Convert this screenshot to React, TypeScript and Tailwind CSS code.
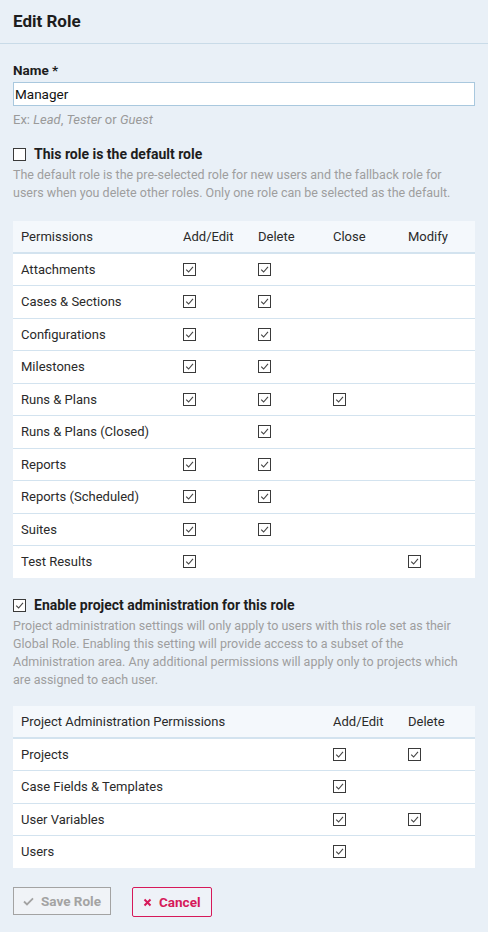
import React from 'react';

const font = { fontFamily: 'Roboto, "Noto Sans", sans-serif' };

type Perm = { name: string; cols: boolean[] };

const permissions: Perm[] = [
  { name: 'Attachments', cols: [true, true, false, false] },
  { name: 'Cases & Sections', cols: [true, true, false, false] },
  { name: 'Configurations', cols: [true, true, false, false] },
  { name: 'Milestones', cols: [true, true, false, false] },
  { name: 'Runs & Plans', cols: [true, true, true, false] },
  { name: 'Runs & Plans (Closed)', cols: [false, true, false, false] },
  { name: 'Reports', cols: [true, true, false, false] },
  { name: 'Reports (Scheduled)', cols: [true, true, false, false] },
  { name: 'Suites', cols: [true, true, false, false] },
  { name: 'Test Results', cols: [true, false, false, true] },
];

const adminPermissions: Perm[] = [
  { name: 'Projects', cols: [true, true] },
  { name: 'Case Fields & Templates', cols: [true, false] },
  { name: 'User Variables', cols: [true, true] },
  { name: 'Users', cols: [true, false] },
];

function Check({ checked }: { checked: boolean }) {
  return (
    <span className="inline-flex w-[13px] h-[13px] border border-[#3a3a3a] bg-white items-center justify-center">
      {checked && (
        <svg width="9" height="9" viewBox="0 0 9 9">
          <path d="M1.2 4.6 L3.6 7 L8 1.8" fill="none" stroke="#444" strokeWidth="1.1" />
        </svg>
      )}
    </span>
  );
}

export default function App() {
  return (
    <div className="w-[488px] min-h-[932px] bg-[#e9f0f7] text-[#222]" style={font}>
      <div className="h-[44px] px-[13px] pt-[1px] flex items-center border-b border-[#c9dbe8]">
        <h1 className="text-[17px] font-bold text-[#1d1d1d]">Edit Role</h1>
      </div>

      <div className="px-[13px] pt-[17px]">
        <label className="block text-[13.5px] font-bold text-[#1d1d1d] leading-[18px]">Name *</label>
        <input
          defaultValue="Manager"
          className="mt-[3px] w-full h-[24px] bg-white border border-[#a9c8de] px-[1px] text-[13.5px] text-[#111] outline-none"
          style={font}
        />
        <p className="mt-[5px] text-[13px] text-[#9a9a9a] leading-[18px]">
          Ex: <i>Lead</i>, <i>Tester</i> or <i>Guest</i>
        </p>

        <div className="mt-[15px] flex items-center gap-[8px]">
          <Check checked={false} />
          <span className="text-[14px] font-bold text-[#1d1d1d]">This role is the default role</span>
        </div>
        <p className="mt-[1px] text-[12.5px] text-[#9e9e9e] leading-[18px]">
          The default role is the pre-selected role for new users and the fallback role for users when you
          delete other roles. Only one role can be selected as the default.
        </p>

        <table className="mt-[19px] w-[462px] border-collapse text-[13px] text-[#2a2a2a]">
          <thead>
            <tr className="bg-[#f4f8fc] border-b-2 border-[#d3e3ef] h-[32px]">
              <th className="text-left font-normal pl-[8px] w-[170px]">Permissions</th>
              <th className="text-left font-normal w-[75px]">Add/Edit</th>
              <th className="text-left font-normal w-[75px]">Delete</th>
              <th className="text-left font-normal w-[75px]">Close</th>
              <th className="text-left font-normal">Modify</th>
            </tr>
          </thead>
          <tbody>
            {permissions.map((p, i) => (
              <tr
                key={p.name}
                className={`bg-white h-[32.5px] ${i < permissions.length - 1 ? 'border-b border-[#d3e3ef]' : ''}`}
              >
                <td className="pl-[8px]">{p.name}</td>
                {p.cols.map((c, j) => (
                  <td key={j}>
                    {c && <Check checked />}
                  </td>
                ))}
              </tr>
            ))}
          </tbody>
        </table>

        <div className="mt-[17px] flex items-center gap-[8px]">
          <Check checked />
          <span className="text-[14px] font-bold text-[#1d1d1d]">Enable project administration for this role</span>
        </div>
        <p className="mt-[1px] text-[12.5px] text-[#9e9e9e] leading-[18px]">
          Project administration settings will only apply to users with this role set as their Global Role.
          Enabling this setting will provide access to a subset of the Administration area. Any additional
          permissions will apply only to projects which are assigned to each user.
        </p>

        <table className="mt-[17px] w-[462px] border-collapse text-[13px] text-[#2a2a2a]">
          <thead>
            <tr className="bg-[#f4f8fc] border-b-2 border-[#d3e3ef] h-[32px]">
              <th className="text-left font-normal pl-[8px] w-[320px]">Project Administration Permissions</th>
              <th className="text-left font-normal w-[75px]">Add/Edit</th>
              <th className="text-left font-normal">Delete</th>
            </tr>
          </thead>
          <tbody>
            {adminPermissions.map((p, i) => (
              <tr
                key={p.name}
                className={`bg-white h-[32.5px] ${i < adminPermissions.length - 1 ? 'border-b border-[#d3e3ef]' : ''}`}
              >
                <td className="pl-[8px]">{p.name}</td>
                {p.cols.map((c, j) => (
                  <td key={j}>
                    {c && <Check checked />}
                  </td>
                ))}
              </tr>
            ))}
          </tbody>
        </table>

        <div className="mt-[19px] flex items-start gap-[21px]">
          <button
            className="h-[28px] px-[9px] flex items-center gap-[7px] border border-[#a3a3a3] bg-[#f0f3f7] text-[#a3a3a3] text-[13.5px] font-bold"
            style={font}
          >
            <svg width="11" height="9" viewBox="0 0 11 9">
              <path d="M1 4.5 L4 7.5 L10 1.3" fill="none" stroke="#a3a3a3" strokeWidth="1.8" />
            </svg>
            Save Role
          </button>
          <button
            className="h-[30px] px-[10px] flex items-center gap-[7px] border border-[#d6195a] rounded-[2px] bg-[#eef2f8] text-[#d6195a] text-[13.5px] font-bold"
            style={font}
          >
            <svg width="9" height="9" viewBox="0 0 9 9">
              <path d="M1.5 1.5 L7.5 7.5 M7.5 1.5 L1.5 7.5" stroke="#d6195a" strokeWidth="2" />
            </svg>
            Cancel
          </button>
        </div>
      </div>
    </div>
  );
}
